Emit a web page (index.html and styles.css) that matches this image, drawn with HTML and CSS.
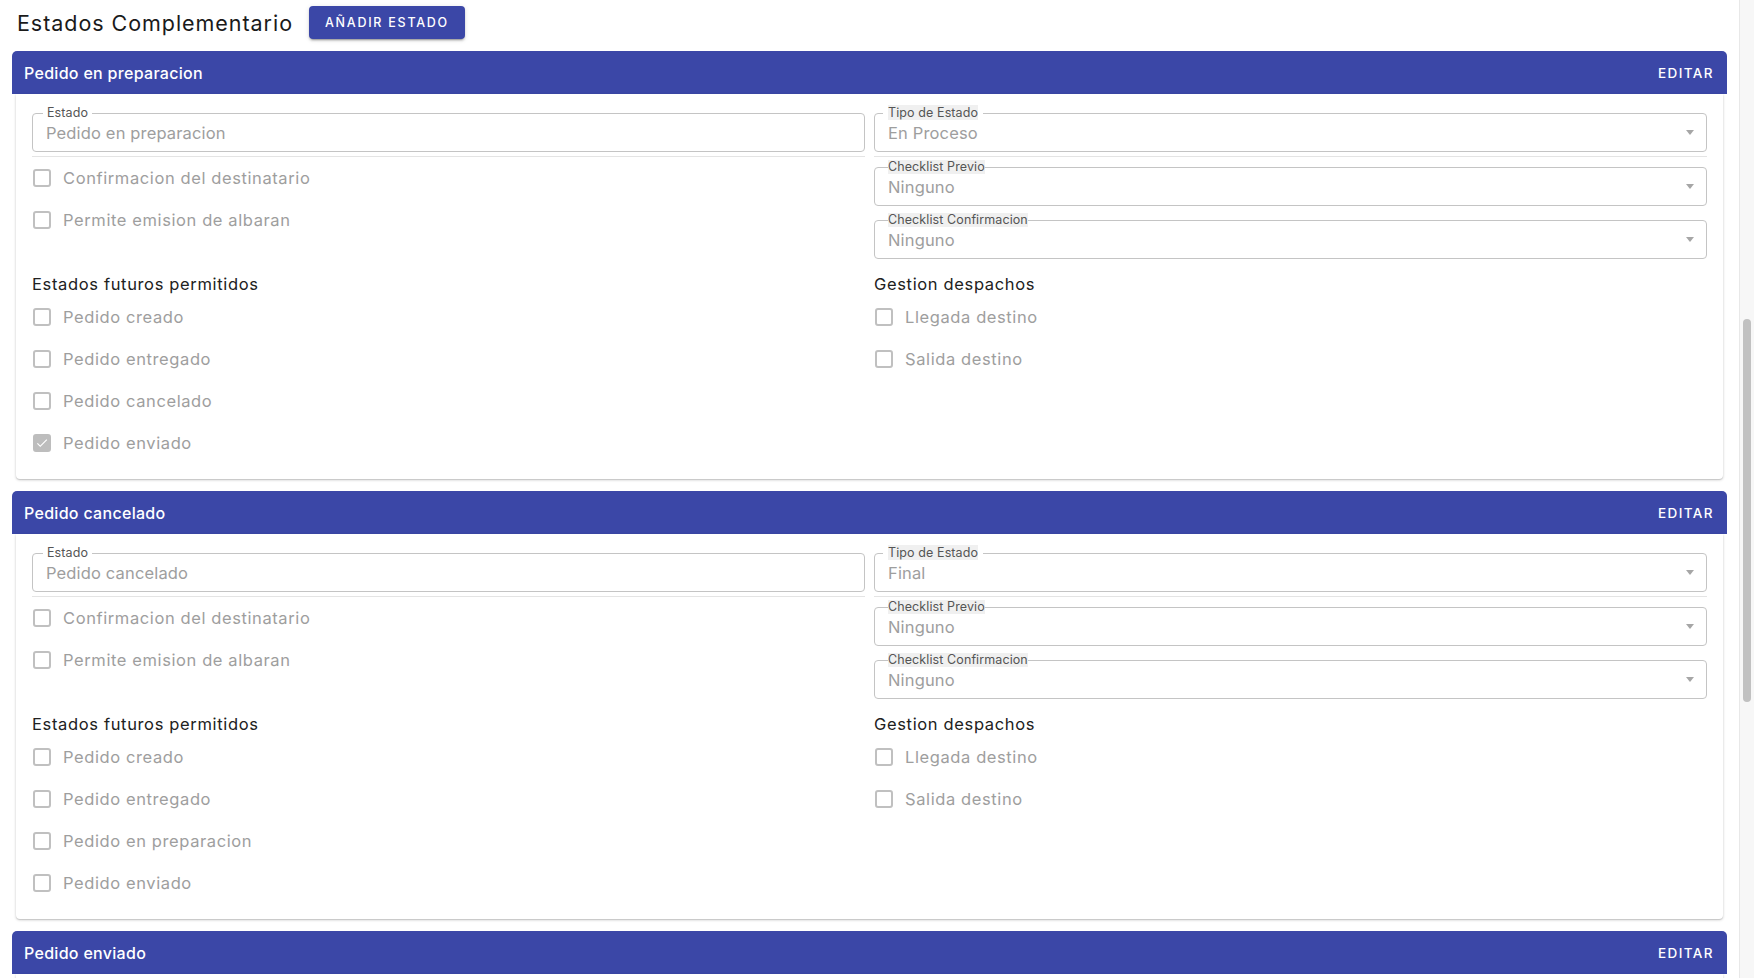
FILE: index.html
```html
<!DOCTYPE html>
<html lang="es">
  <head>
    <meta charset="UTF-8" />
    <meta name="viewport" content="width=device-width, initial-scale=1.0" />
    <title>Estados Complementario</title>
    <link rel="stylesheet" href="styles.css">
  </head>
  <body>
    <div class="page">
      <div class="page__top">
        <h1 class="page__title">Estados Complementario</h1>
        <button class="btn-add">Añadir estado</button>
      </div>

      <!-- Pedido en preparacion -->
      <div class="card">
        <div class="card__head">
          <span class="card__name">Pedido en preparacion</span>
          <span class="card__edit">Editar</span>
        </div>
        <div class="card__body">
          <div class="col">
            <div class="field-group">
              <div class="field">
                <span class="field__label">Estado</span>
                <span class="field__value">Pedido en preparacion</span>
              </div>
            </div>
            <label class="check"><span class="check__box"></span>Confirmacion del destinatario</label>
            <label class="check"><span class="check__box"></span>Permite emision de albaran</label>
          </div>
          <div class="col">
            <div class="field-group">
              <div class="field">
                <span class="field__label field__label--notch"><span class="field__label-text">Tipo de Estado</span></span>
                <span class="field__value">En Proceso</span>
                <span class="field__arrow"></span>
              </div>
            </div>
            <div class="field field--select">
              <span class="field__label field__label--tight">Checklist Previo</span>
              <span class="field__value">Ninguno</span>
              <span class="field__arrow"></span>
            </div>
            <div class="field field--select field--last">
              <span class="field__label field__label--tight">Checklist Confirmacion</span>
              <span class="field__value">Ninguno</span>
              <span class="field__arrow"></span>
            </div>
          </div>
          <div class="section">
            <p class="section__title">Estados futuros permitidos</p>
            <label class="check"><span class="check__box"></span>Pedido creado</label>
            <label class="check"><span class="check__box"></span>Pedido entregado</label>
            <label class="check"><span class="check__box"></span>Pedido cancelado</label>
            <label class="check"><span class="check__box check__box--on"><svg viewBox="0 0 24 24" width="14" height="14"><path d="M9 16.2L4.8 12l-1.4 1.4L9 19 21 7l-1.4-1.4L9 16.2z" fill="#fff"/></svg></span>Pedido enviado</label>
          </div>
          <div class="section">
            <p class="section__title">Gestion despachos</p>
            <label class="check"><span class="check__box"></span>Llegada destino</label>
            <label class="check"><span class="check__box"></span>Salida destino</label>
          </div>
        </div>
      </div>

      <!-- Pedido cancelado -->
      <div class="card">
        <div class="card__head">
          <span class="card__name">Pedido cancelado</span>
          <span class="card__edit">Editar</span>
        </div>
        <div class="card__body">
          <div class="col">
            <div class="field-group">
              <div class="field">
                <span class="field__label">Estado</span>
                <span class="field__value">Pedido cancelado</span>
              </div>
            </div>
            <label class="check"><span class="check__box"></span>Confirmacion del destinatario</label>
            <label class="check"><span class="check__box"></span>Permite emision de albaran</label>
          </div>
          <div class="col">
            <div class="field-group">
              <div class="field">
                <span class="field__label field__label--notch"><span class="field__label-text">Tipo de Estado</span></span>
                <span class="field__value">Final</span>
                <span class="field__arrow"></span>
              </div>
            </div>
            <div class="field field--select">
              <span class="field__label field__label--tight">Checklist Previo</span>
              <span class="field__value">Ninguno</span>
              <span class="field__arrow"></span>
            </div>
            <div class="field field--select field--last">
              <span class="field__label field__label--tight">Checklist Confirmacion</span>
              <span class="field__value">Ninguno</span>
              <span class="field__arrow"></span>
            </div>
          </div>
          <div class="section">
            <p class="section__title">Estados futuros permitidos</p>
            <label class="check"><span class="check__box"></span>Pedido creado</label>
            <label class="check"><span class="check__box"></span>Pedido entregado</label>
            <label class="check"><span class="check__box"></span>Pedido en preparacion</label>
            <label class="check"><span class="check__box"></span>Pedido enviado</label>
          </div>
          <div class="section">
            <p class="section__title">Gestion despachos</p>
            <label class="check"><span class="check__box"></span>Llegada destino</label>
            <label class="check"><span class="check__box"></span>Salida destino</label>
          </div>
        </div>
      </div>

      <!-- Pedido enviado (body below the fold) -->
      <div class="card">
        <div class="card__head">
          <span class="card__name">Pedido enviado</span>
          <span class="card__edit">Editar</span>
        </div>
        <div class="card__body card__body--empty"></div>
      </div>
    </div>

    <div class="scrollbar"><div class="scrollbar__thumb"></div></div>
  </body>
</html>
```

FILE: styles.css
```css
*{margin:0;padding:0;box-sizing:border-box;}
html,body{height:100%;}
body{display:flex;overflow:hidden;background:#fff;font-family:"Inter","Liberation Sans",sans-serif;color:#212121;}

.page{flex:1;height:100vh;overflow:hidden;padding:6px 12px 0;}
.page__top{display:flex;align-items:center;height:33px;margin-bottom:12px;}
.page__title{margin-left:5px;font-size:21.5px;font-weight:400;letter-spacing:0.95px;color:#1a1a1a;}
.btn-add{margin-left:16px;height:33px;padding:0 16px;border:none;border-radius:4px;background:#3b47a7;color:#fff;font-family:inherit;font-size:12.5px;font-weight:500;letter-spacing:1.75px;text-transform:uppercase;box-shadow:0 3px 1px -2px rgba(0,0,0,.2),0 2px 2px rgba(0,0,0,.14),0 1px 5px rgba(0,0,0,.12);cursor:pointer;}

.card{margin-bottom:12px;}
.card__head{display:flex;justify-content:space-between;align-items:center;height:43px;padding:0 13px 0 12px;background:#3b47a7;border-radius:5px 5px 0 0;color:#fff;}
.card__name{font-size:16px;font-weight:500;letter-spacing:0.3px;}
.card__edit{font-size:13.5px;font-weight:500;letter-spacing:1.4px;text-transform:uppercase;}
.card__body{margin:0 4px;padding:19px 16px 15px;background:#fff;display:grid;grid-template-columns:1fr 1fr;column-gap:9px;align-content:start;box-shadow:0 1px 3px rgba(0,0,0,.2),0 1px 1px rgba(0,0,0,.1);border-radius:0 0 4px 4px;}
.card__body--empty{height:120px;}

.col{display:flex;flex-direction:column;}
.field-group{padding-bottom:4px;border-bottom:1px solid #e4e4e4;}
.field{position:relative;display:flex;align-items:center;height:39px;padding:0 12px 0 13px;border:1px solid #c4c4c4;border-radius:4px;}
.field--select{margin-top:10px;}
.field--last{margin-top:14px;}
.field__label{position:absolute;top:-8px;left:10px;padding:0 4px;background:#fff;font-size:12.5px;line-height:14px;color:#555;letter-spacing:0.1px;}
.field__label--notch{left:8px;padding:0 5px;}
.field__label-text{background:#f0f0f0;}
.field__label--tight{left:13px;padding:0;background:#f0f0f0;}
.field__value{flex:1;font-size:16.5px;color:#9e9e9e;letter-spacing:0.15px;}
.field__arrow{width:0;height:0;border-left:4.5px solid transparent;border-right:4.5px solid transparent;border-top:5px solid #a6a6a6;}

.check{display:flex;align-items:center;height:42px;gap:12px;font-size:16.5px;color:#9e9e9e;letter-spacing:0.6px;}
.check__box{display:flex;align-items:center;justify-content:center;width:18px;height:18px;margin-left:1px;border:2px solid #c0c0c0;border-radius:3px;flex:none;}
.check__box--on{background:#bdbdbd;border-color:#bdbdbd;}

.section{margin-top:13px;}
.section__title{height:24px;line-height:24px;font-size:16.5px;color:#212121;letter-spacing:0.65px;}

.scrollbar{width:15px;height:100vh;flex:none;background:#f7f7f7;border-left:1px solid #e8e8e8;padding:319px 0 0 3px;}
.scrollbar__thumb{width:8px;height:383px;border-radius:4px;background:#c1c1c1;}
```
